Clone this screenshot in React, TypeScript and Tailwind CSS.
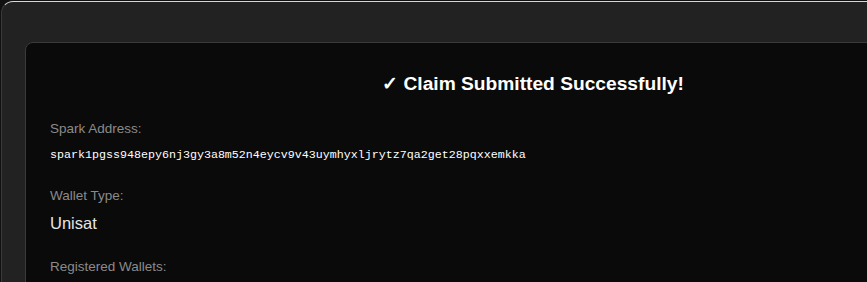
export default function App() {
  return (
    <div className="h-[282px] w-[867px] overflow-hidden bg-[#111111] pt-[1px] pl-[1px]" style={{ fontFamily: '"Liberation Sans", Arial, sans-serif' }}>
      <div className="w-[1100px] h-[400px] rounded-tl-[12px] border-t border-l border-t-[#d8d8d8] border-l-[#3a3a3a] bg-[#222222] pt-[40px] pl-[23px]">
        <div className="w-[1016px] h-[360px] rounded-tl-[8px] border border-[#3a3a3a] bg-[#0a0a0a] px-[24px] pt-[28px]">
          <h2 className="text-center text-[19.2px] font-bold leading-[26px] text-white">✓ Claim Submitted Successfully!</h2>
          <div className="mt-[24px]">
            <div className="text-[13.5px] leading-[16px] text-[#8a8a8a]">Spark Address:</div>
            <div className="mt-[11px] text-[11.67px] leading-[14px] text-white" style={{ fontFamily: '"Liberation Mono", "Courier New", monospace' }}>spark1pgss948epy6nj3gy3a8m52n4eycv9v43uymhyxljrytz7qa2get28pqxxemkka</div>
          </div>
          <div className="mt-[26px]">
            <div className="text-[13.5px] leading-[16px] text-[#8a8a8a]">Wallet Type:</div>
            <div className="mt-[9px] text-[16.5px] leading-[20px] text-[#e6e6e6]">Unisat</div>
          </div>
          <div className="mt-[26px]">
            <div className="text-[13.5px] leading-[16px] text-[#8a8a8a]">Registered Wallets:</div>
          </div>
        </div>
      </div>
    </div>
  );
}
